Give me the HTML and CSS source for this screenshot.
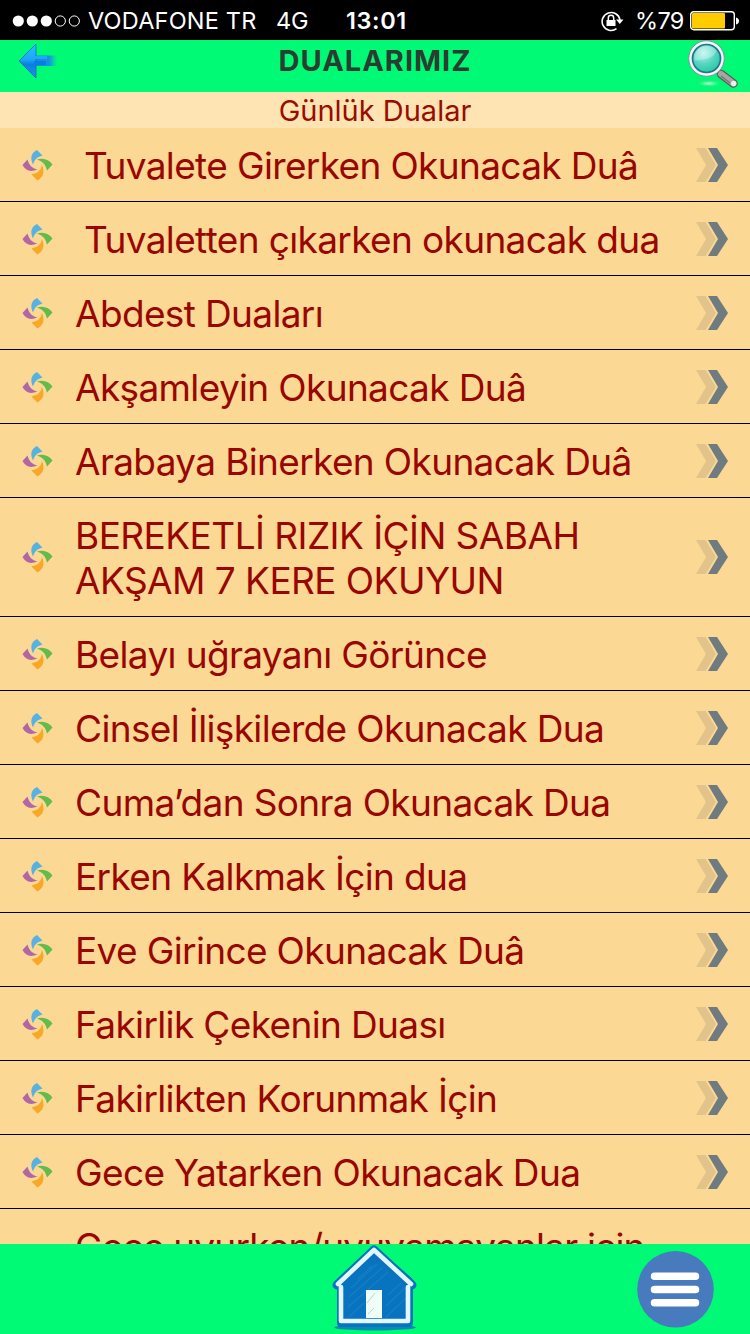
FILE: index.html
```html
<!DOCTYPE html>
<html lang="tr">
<head>
    <meta charset="UTF-8">
    <meta name="viewport" content="width=device-width, initial-scale=1.0">
    <title>Dualarımız</title>
    <link rel="stylesheet" href="styles.css">
</head>
<body>
    <!-- shared icons -->
    <svg class="sprite" width="0" height="0">
        <symbol id="pinwheel" viewBox="0 0 32 32">
            <path fill="#55b2e3" d="M12 15.500C9 9 10 4 16 1L21.500 6.500C15.500 8 13.500 11 12 15.500Z"/>
            <path fill="#63bb4b" d="M16 10.500C23 8.500 28 11 31.500 15.500L26 21.500C24.500 15 21 12 16 10.500Z"/>
            <path fill="#f9a825" d="M21 16C24 23 22.500 28 16.500 31.500L10.500 25.500C17.500 24 20 21 21 16Z"/>
            <path fill="#b266a5" d="M16.500 20.500C9 23.500 4.500 21.500 1.500 16L6.500 10.500C8 16 11 19.500 16.500 20.500Z"/>
        </symbol>
        <symbol id="chevrons" viewBox="0 0 34 36">
            <path fill="#e2c48a" d="M1 1H11L22 18L11 35H1L11 18Z"/>
            <path fill="#fbd894" d="M10 0H14L25 18L14 36H10L21 18Z"/>
            <path fill="#707b80" d="M13 1H22L33 18L22 35H13L23 18Z"/>
        </symbol>
    </svg>

    <div class="status-bar">
        <svg class="signal" width="70" height="14" viewBox="0 0 70 14">
            <g fill="#fff"><circle cx="6.3" cy="7" r="5.6"/><circle cx="20.3" cy="7" r="5.6"/><circle cx="34.3" cy="7" r="5.6"/></g>
            <g fill="none" stroke="#fff" stroke-width="1"><circle cx="48.3" cy="7" r="5.1"/><circle cx="62.3" cy="7" r="5.1"/></g>
        </svg>
        <span class="carrier">VODAFONE TR</span>
        <span class="network">4G</span>
        <span class="time">13:01</span>
        <svg class="lock" width="24" height="22" viewBox="0 0 24 22">
            <path fill="none" stroke="#fff" stroke-width="1.6" d="M16.5 18.7A9 9 0 1 1 20 10"/>
            <path fill="#fff" d="M16 9.5H23.5L19.8 14ZM6.5 10H15.5V16H6.5Z"/>
            <path fill="none" stroke="#fff" stroke-width="1.5" d="M8.3 10V8A2.7 2.7 0 0 1 13.7 8V10"/>
        </svg>
        <span class="percent">%79</span>
        <svg class="battery" width="50" height="20" viewBox="0 0 50 20">
            <rect x=".7" y=".7" width="43.6" height="18" rx="3" fill="none" stroke="#fff" stroke-width="1.4"/>
            <rect x="2" y="2" width="33" height="15.5" rx="1" fill="#fc0"/>
            <path fill="#fff" d="M46 6.5Q49 7.500 49 10T46 13.500Z"/>
        </svg>
    </div>

    <header class="header">
        <svg class="back" width="40" height="36" viewBox="0 0 40 36">
            <defs>
                <linearGradient id="arrow" x2="0" y2="1">
                    <stop offset="0" stop-color="#22c4ff"/><stop offset=".45" stop-color="#20a5f5"/>
                    <stop offset=".6" stop-color="#087fdf"/><stop offset="1" stop-color="#2690ef"/>
                </linearGradient>
                <linearGradient id="tail">
                    <stop offset="0" stop-color="#108ae5"/><stop offset=".65" stop-color="#1592e5"/>
                    <stop offset="1" stop-color="#16a5cc" stop-opacity="0"/>
                </linearGradient>
            </defs>
            <path fill="url(#tail)" d="M17 12.500H39V23H17Z"/>
            <path fill="url(#arrow)" stroke="#1769bb" stroke-width=".8" d="M1 18L18 1V35Z"/>
            <path fill="#20a7f5" d="M16 13H29V16H16Z"/>
            <path fill="#087fdf" d="M16 18H28V22H16Z"/>
        </svg>
        <h1 class="title">DUALARIMIZ</h1>
        <svg class="search" width="52" height="50" viewBox="0 0 52 50">
            <defs>
                <radialGradient id="lens" cx=".4" cy=".3" r=".75">
                    <stop offset="0" stop-color="#b7f3ef"/><stop offset=".55" stop-color="#54d5c1"/>
                    <stop offset="1" stop-color="#20c9a0"/>
                </radialGradient>
                <radialGradient id="glow">
                    <stop offset="0" stop-color="#d5ffe5"/><stop offset="1" stop-color="#00e66b" stop-opacity="0"/>
                </radialGradient>
            </defs>
            <ellipse cx="22" cy="43.500" rx="14" ry="4" fill="url(#glow)"/>
            <path stroke="#555d5a" stroke-width="8.500" stroke-linecap="round" d="M34 34L46.500 43.500"/>
            <path stroke="#a6a6a6" stroke-width="6" stroke-linecap="round" d="M34 34L46.500 43.500"/>
            <path stroke="#777" stroke-width="1.500" d="M34 36L43 43"/>
            <circle cx="46.700" cy="43.500" r="2.700" fill="#eee"/>
            <circle cx="19.500" cy="18.500" r="17.800" fill="#f3f4fb" stroke="#80919b" stroke-width="1"/>
            <circle cx="19.500" cy="18.500" r="14" fill="url(#lens)" stroke="#267487" stroke-width="1.700"/>
            <path fill="#fff" opacity=".3" d="M7.500 20.500A12.500 12.500 0 0 1 29.500 10.500Q27.500 19.500 7.500 20.500Z"/>
        </svg>
    </header>

    <h2 class="section-title">Günlük Dualar</h2>

    <ul class="list">
        <li class="row indent"><svg class="bullet"><use href="#pinwheel"/></svg><span class="name">Tuvalete Girerken Okunacak Duâ</span><svg class="more"><use href="#chevrons"/></svg></li>
        <li class="row indent"><svg class="bullet"><use href="#pinwheel"/></svg><span class="name">Tuvaletten çıkarken okunacak dua</span><svg class="more"><use href="#chevrons"/></svg></li>
        <li class="row"><svg class="bullet"><use href="#pinwheel"/></svg><span class="name">Abdest Duaları</span><svg class="more"><use href="#chevrons"/></svg></li>
        <li class="row"><svg class="bullet"><use href="#pinwheel"/></svg><span class="name">Akşamleyin Okunacak Duâ</span><svg class="more"><use href="#chevrons"/></svg></li>
        <li class="row"><svg class="bullet"><use href="#pinwheel"/></svg><span class="name">Arabaya Binerken Okunacak Duâ</span><svg class="more"><use href="#chevrons"/></svg></li>
        <li class="row caps"><svg class="bullet"><use href="#pinwheel"/></svg><span class="name">BEREKETLİ RIZIK İÇİN SABAH<br>AKŞAM 7 KERE OKUYUN</span><svg class="more"><use href="#chevrons"/></svg></li>
        <li class="row"><svg class="bullet"><use href="#pinwheel"/></svg><span class="name">Belayı uğrayanı Görünce</span><svg class="more"><use href="#chevrons"/></svg></li>
        <li class="row"><svg class="bullet"><use href="#pinwheel"/></svg><span class="name">Cinsel İlişkilerde Okunacak Dua</span><svg class="more"><use href="#chevrons"/></svg></li>
        <li class="row"><svg class="bullet"><use href="#pinwheel"/></svg><span class="name">Cuma’dan Sonra Okunacak Dua</span><svg class="more"><use href="#chevrons"/></svg></li>
        <li class="row"><svg class="bullet"><use href="#pinwheel"/></svg><span class="name">Erken Kalkmak İçin dua</span><svg class="more"><use href="#chevrons"/></svg></li>
        <li class="row"><svg class="bullet"><use href="#pinwheel"/></svg><span class="name">Eve Girince Okunacak Duâ</span><svg class="more"><use href="#chevrons"/></svg></li>
        <li class="row"><svg class="bullet"><use href="#pinwheel"/></svg><span class="name">Fakirlik Çekenin Duası</span><svg class="more"><use href="#chevrons"/></svg></li>
        <li class="row"><svg class="bullet"><use href="#pinwheel"/></svg><span class="name">Fakirlikten Korunmak İçin</span><svg class="more"><use href="#chevrons"/></svg></li>
        <li class="row"><svg class="bullet"><use href="#pinwheel"/></svg><span class="name">Gece Yatarken Okunacak Dua</span><svg class="more"><use href="#chevrons"/></svg></li>
        <li class="row last"><span class="name">Gece uyurken/uyuyamayanlar için</span></li>
    </ul>

    <footer class="footer">
        <svg class="home" width="88" height="88" viewBox="0 0 88 88">
            <ellipse cx="44" cy="82.500" rx="41" ry="3" fill="#078bb0"/>
            <g fill="#0874bf" stroke="#0874bf" stroke-linejoin="round" stroke-linecap="round">
                <path stroke-width="8" d="M10 36V78H78V36L43 6Z"/>
                <path fill="none" stroke-width="9" d="M6 40L43 5L81 40"/>
            </g>
            <path stroke="#2890cf" stroke-width="1.200" opacity=".4" d="M20 43L46 19M18 52L52 22M17 62L57 27M18 72L33 58M55 72L75 53M55 61L75 42M27 34L41 21M57 50L70 38"/>
            <path fill="none" stroke="#e4f7ff" stroke-width="4.600" stroke-linejoin="round" stroke-linecap="round" d="M7 39L43 5L80 39M10 42V76H77V42"/>
            <path fill="#effff8" d="M35 45H51V73H35Z"/>
            <path stroke="#a7dcdf" stroke-width="1" d="M36 58L44 48M37 69L43 63"/>
        </svg>
        <svg class="menu" width="78" height="78" viewBox="0 0 78 78">
            <circle cx="39.500" cy="39.300" r="38.300" fill="#477bbd"/>
            <path stroke="#fff" stroke-width="7.500" stroke-linecap="round" d="M18.500 26.300H59.500M18.500 39.500H59.500M18.500 52.800H59.500"/>
        </svg>
    </footer>
</body>
</html>
```
FILE: styles.css
```css
* {
    margin: 0;
    padding: 0;
    box-sizing: border-box;
}

body {
    width: 750px;
    height: 1334px;
    display: flex;
    flex-direction: column;
    overflow: hidden;
    background: #fbd894;
    font-family: Inter, "Liberation Sans", sans-serif;
}

svg {
    flex-shrink: 0;
}

.sprite {
    position: absolute;
}

.status-bar {
    height: 40px;
    flex-shrink: 0;
    display: flex;
    align-items: center;
    padding: 1px 10px 0 12px;
    background: #000;
    color: #fff;
    font-size: 23.5px;
    white-space: nowrap;
}

.carrier {
    width: 187px;
    padding-left: 6px;
    letter-spacing: 0.2px;
}

.network {
    width: 76px;
    padding-left: 7px;
    letter-spacing: -0.3px;
}

.time {
    width: 255px;
    padding-left: 1px;
    font-weight: 600;
    letter-spacing: 0.6px;
}

.percent {
    width: 55px;
    margin-left: 11px;
    letter-spacing: -0.7px;
}

.header {
    height: 52px;
    flex-shrink: 0;
    display: grid;
    grid-template-columns: 1fr auto 1fr;
    align-items: start;
    padding: 0 11px;
    background: #00fa75;
}

.back {
    margin: 3px 0 0 7px;
}

.title {
    color: #2b3d31;
    font-size: 29px;
    line-height: 42px;
    letter-spacing: 1px;
}

.search {
    justify-self: end;
}

.section-title {
    height: 36px;
    flex-shrink: 0;
    background: #fee4b3;
    color: #990c00;
    font-size: 29px;
    font-weight: 400;
    line-height: 37px;
    text-align: center;
}

.list {
    flex: 1;
    min-height: 0;
    overflow: hidden;
    list-style: none;
}

.row {
    display: flex;
    align-items: center;
    padding: 14px 21px;
    border-bottom: 1px solid #000;
    color: #990500;
    font-size: 37px;
    line-height: 45px;
    letter-spacing: -0.64px;
    white-space: nowrap;
}

.bullet {
    width: 32px;
    height: 32px;
}

.name {
    flex: 1;
    padding-left: 22px;
    margin: 1px 0 -1px;
}

.indent .name {
    padding-left: 31px;
}

.caps {
    letter-spacing: -0.55px;
}

.more {
    width: 34px;
    height: 36px;
}

.last {
    padding-left: 53px;
    letter-spacing: -0.8px;
}

.footer {
    height: 90px;
    flex-shrink: 0;
    display: grid;
    grid-template-columns: 1fr auto 1fr;
    align-items: center;
    padding: 0 36px;
    background: #00fa75;
}

.home {
    grid-column: 2;
}

.menu {
    justify-self: end;
}
```
